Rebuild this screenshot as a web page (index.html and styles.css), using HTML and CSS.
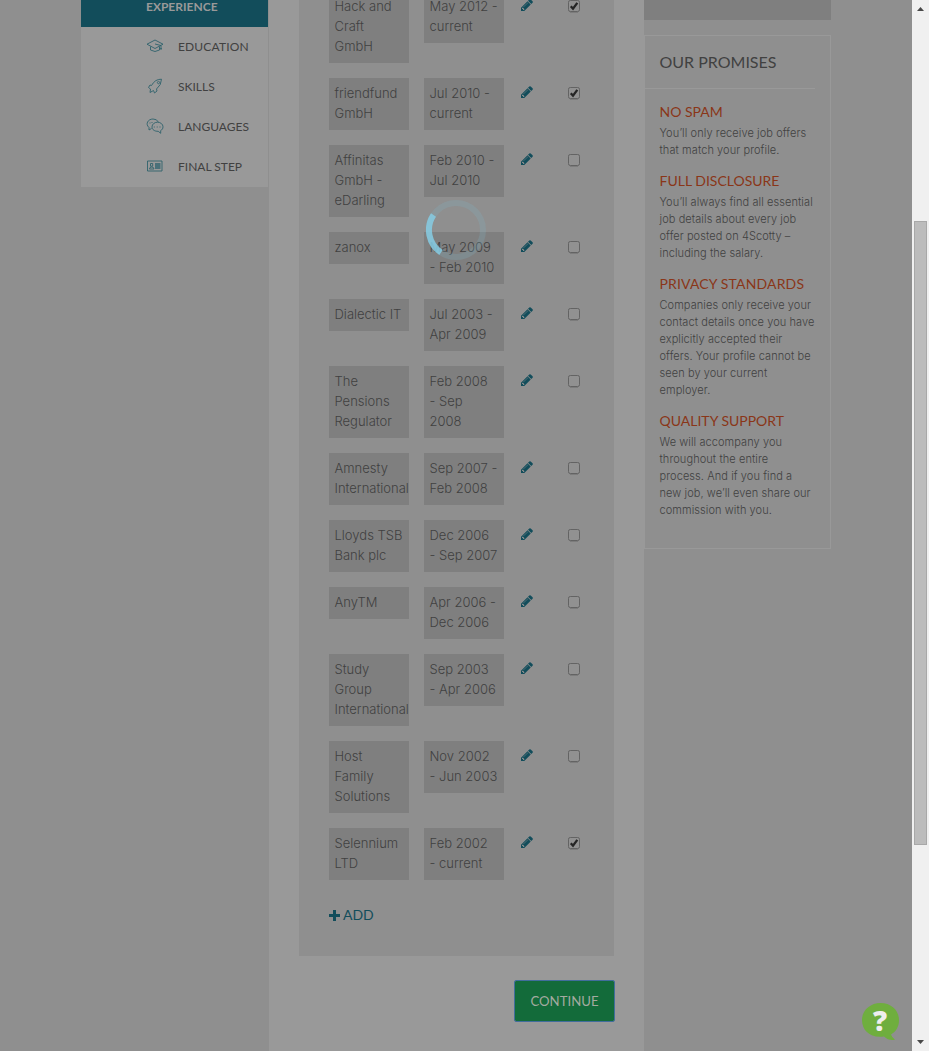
FILE: index.html
```
<!DOCTYPE html>
<html lang="en">
<head>
<meta charset="utf-8">
<title>Experience</title>
<link rel="stylesheet" href="styles.css">
</head>
<body>
<svg class="defs" width="0" height="0" aria-hidden="true">
  <symbol id="pencil" viewBox="0 0 1536 1536"><path d="M363 1408l91-91-235-235-91 91v107h128v128h107zM886 480q0-22-22-22-10 0-17 7l-542 542q-7 7-7 17 0 22 22 22 10 0 17-7l542-542q7-7 7-17zM832 288l416 416-832 832h-416v-416zM1515 384q0 53-37 90l-166 166-416-416 166-165q36-38 90-38 53 0 91 38l235 234q37 39 37 91z"/></symbol>
  <symbol id="off" viewBox="0 0 13 14"><path d="M2 12.500h8" stroke="#7c7c7c"/><rect x=".5" y=".5" width="11" height="11" rx="1.800" fill="#919191" stroke="#636363"/></symbol>
  <symbol id="on" viewBox="0 0 13 14"><use href="#off"/><path d="M2.800 6.200L5 8.700 9.300 2.900" fill="none" stroke="#252525" stroke-width="2.300"/></symbol>
</svg>
<div class="window">
  <div class="page">
    <nav class="sidebar">
      <div class="step active">EXPERIENCE</div>
      <div class="step wide">
        <svg class="icon" viewBox="0 0 18 16"><path d="M1 6.200L9 2l8 4.200L9 10.500zM4.500 8.500V12q4.500 3 9 0V8.500M9 6l6 1.500V12M14.200 10.500h1.600"/></svg>EDUCATION</div>
      <div class="step">
        <svg class="icon" viewBox="0 0 18 16"><path d="M5.500 7.500Q9 1 15.500 1.200 15.500 7 10.500 11L11 13l-2.500 2L7.500 12.500 4 14.500 4.500 11 2.500 9.500 4 7zM11.300 4.500a1.200 1.200 0 1 1 0 .1"/></svg>SKILLS</div>
      <div class="step">
        <svg class="icon" viewBox="0 0 18 16"><path d="M5.500 10.500L3 12V9.500C-1 6 2 1 7 1q4 0 5.300 3M11.500 4.200c3 0 5.500 2 5.500 4.600 0 2-1 3-2.300 3.700v2.800l-2.500-2c-3.500.2-6.200-1.700-6.200-4.400s2.500-4.700 5.500-4.700zM8.300 8.500v1M11.200 8.500v1M14 8.500v1M4 4.500v1M6 4v1"/></svg>LANGUAGES</div>
      <div class="step">
        <svg class="icon" viewBox="0 0 18 16"><path d="M1.500 3h14.500v10h-14.500zM3.500 11q0-2 2.200-2T8 11zM4.500 5.500h2.200v2.700H4.500z"/><path class="solid" d="M9 5h5.500v6H9z"/></svg>FINAL STEP</div>
    </nav>

    <main class="center">
      <section class="panel">
        <div class="jobs">
          <div class="job"><div class="cell">Hack and<br>Craft<br>GmbH</div><div class="cell">May 2012 -<br>current</div><svg class="edit"><use href="#pencil"/></svg><svg class="check"><use href="#on"/></svg></div>
          <div class="job"><div class="cell">friendfund<br>GmbH</div><div class="cell">Jul 2010 -<br>current</div><svg class="edit"><use href="#pencil"/></svg><svg class="check"><use href="#on"/></svg></div>
          <div class="job"><div class="cell">Affinitas<br>GmbH -<br>eDarling</div><div class="cell">Feb 2010 -<br>Jul 2010</div><svg class="edit"><use href="#pencil"/></svg><svg class="check"><use href="#off"/></svg></div>
          <div class="job"><div class="cell">zanox</div><div class="cell">May 2009<br>- Feb 2010</div><svg class="edit"><use href="#pencil"/></svg><svg class="check"><use href="#off"/></svg></div>
          <div class="job"><div class="cell">Dialectic IT</div><div class="cell">Jul 2003 -<br>Apr 2009</div><svg class="edit"><use href="#pencil"/></svg><svg class="check"><use href="#off"/></svg></div>
          <div class="job"><div class="cell">The<br>Pensions<br>Regulator</div><div class="cell">Feb 2008<br>- Sep<br>2008</div><svg class="edit"><use href="#pencil"/></svg><svg class="check"><use href="#off"/></svg></div>
          <div class="job"><div class="cell">Amnesty<br>International</div><div class="cell">Sep 2007 -<br>Feb 2008</div><svg class="edit"><use href="#pencil"/></svg><svg class="check"><use href="#off"/></svg></div>
          <div class="job"><div class="cell">Lloyds TSB<br>Bank plc</div><div class="cell">Dec 2006<br>- Sep 2007</div><svg class="edit"><use href="#pencil"/></svg><svg class="check"><use href="#off"/></svg></div>
          <div class="job"><div class="cell">AnyTM</div><div class="cell">Apr 2006 -<br>Dec 2006</div><svg class="edit"><use href="#pencil"/></svg><svg class="check"><use href="#off"/></svg></div>
          <div class="job"><div class="cell">Study<br>Group<br>International</div><div class="cell">Sep 2003<br>- Apr 2006</div><svg class="edit"><use href="#pencil"/></svg><svg class="check"><use href="#off"/></svg></div>
          <div class="job"><div class="cell">Host<br>Family<br>Solutions</div><div class="cell">Nov 2002<br>- Jun 2003</div><svg class="edit"><use href="#pencil"/></svg><svg class="check"><use href="#off"/></svg></div>
          <div class="job"><div class="cell">Selennium<br>LTD</div><div class="cell">Feb 2002<br>- current</div><svg class="edit"><use href="#pencil"/></svg><svg class="check"><use href="#on"/></svg></div>
        </div>
        <div class="add"><svg class="plus" viewBox="0 0 11 11"><path d="M5.500 0v11M0 5.500h11"/></svg>ADD</div>
      </section>
      <div class="actions"><button class="continue">CONTINUE</button></div>
    </main>

    <aside class="aside">
      <div class="stub"></div>
      <section class="promises">
        <h2>OUR PROMISES</h2>
        <h3>NO SPAM</h3>
        <p>You’ll only receive job offers<br>that match your profile.</p>
        <h3>FULL DISCLOSURE</h3>
        <p>You’ll always find all essential<br>job details about every job<br>offer posted on 4Scotty –<br>including the salary.</p>
        <h3 class="wide">PRIVACY STANDARDS</h3>
        <p>Companies only receive your<br>contact details once you have<br>explicitly accepted their<br>offers. Your profile cannot be<br>seen by your current<br>employer.</p>
        <h3>QUALITY SUPPORT</h3>
        <p>We will accompany you<br>throughout the entire<br>process. And if you find a<br>new job, we’ll even share our<br>commission with you.</p>
      </section>
    </aside>
  </div>
  <div class="scrollbar">
    <svg class="arrow" viewBox="0 0 7 4"><path d="M0 4L3.500 0 7 4z"/></svg>
    <div class="thumb"></div>
    <svg class="arrow" viewBox="0 0 7 4"><path d="M0 0L3.500 4 7 0z"/></svg>
  </div>
  <svg class="spinner" viewBox="0 0 60 60"><circle cx="30" cy="30" r="27"/><path d="M7.500 15A27 27 0 0 0 15 52.500"/></svg>
  <div class="help"><svg viewBox="0 0 38 38"><path d="M19.500 0C30 0 38 7 38 17c0 7-3 11.500-8 14.500q1 3 4 5.200-6 1.500-11-3.200C10 35.500 1 28 1 17 1 7 9.500 0 19.500 0z"/></svg><span>?</span></div>
</div>
</body>
</html>
```
FILE: styles.css
```
* { box-sizing: border-box; }
body { margin: 0; background: #8f8f8f; color: #414141; font: 300 13px/20px Inter, "Open Sans", sans-serif; }
.defs { position: absolute; }
.window { position: relative; display: flex; width: 929px; height: 1051px; overflow: hidden; }
.page { display: flex; align-items: flex-start; width: 912px; height: 1051px; padding-left: 81px; background: #8f8f8f; }

.sidebar { width: 187px; margin-right: 1px; background: #999; font: 400 12px/40px Lato, sans-serif; }
.step { display: flex; align-items: center; height: 40px; padding-left: 65px; }
.step.active { height: 27px; line-height: 14px; align-items: flex-start; background: #124d5b; color: #999; font-weight: 700; }
.step.wide { letter-spacing: .15px; }
.icon { width: 18px; height: 16px; margin: -3px 14px 0 0; fill: none; stroke: #2f626c; stroke-width: .9; }
.icon .solid { fill: #497079; stroke: none; }

.center { width: 375px; height: 1051px; padding: 0 30px; background: #999; }
.panel { height: 956px; padding: 0 30px; background: #8f8f8f; overflow: hidden; }
.jobs { display: flex; flex-direction: column; gap: 15px; margin-top: -9px; }
.job { display: flex; align-items: flex-start; }
.cell { width: 80px; margin-right: 15px; padding: 5px 0 7px 5.500px; background: #7f7f7f; white-space: nowrap; }
.edit { width: 12px; height: 12px; margin: 8px 35px 0 2px; fill: #124d5b; }
.check { width: 13px; height: 14px; margin-top: 9px; }
.add { display: flex; align-items: center; gap: 3px; margin-top: 25px; color: #124d5b; font: 400 14px/20px Lato, sans-serif; }
.plus { width: 11px; height: 11px; fill: none; stroke: #124d5b; stroke-width: 3; }
.actions { display: flex; justify-content: flex-end; padding-top: 25px; }
.continue { width: 99px; height: 40px; padding: 0; border: 0; border-radius: 1px; outline: 1px solid #416d9c; background: #136b3a; color: #a3aaa0; font: 400 13.200px/39px Lato, sans-serif; }

.aside { width: 187px; }
.stub { height: 20px; margin-bottom: 15px; background: #7f7f7f; }
.promises { height: 514px; padding: 0 15px 0 0; border: 1px solid #999; font-size: 11px; line-height: 17px; white-space: nowrap; }
.promises h2 { height: 53px; margin: 0 0 13px; padding-left: 14.500px; border-bottom: 1px solid #999; font: 400 16px/52px Lato, sans-serif; }
.promises h3 { margin: 0 0 3px 14.500px; color: #8a3618; font: 400 14px/20px Lato, sans-serif; }
.promises h3.wide { letter-spacing: .15px; }
.promises p { margin: 0 0 12px 14.500px; letter-spacing: .08px; }

.scrollbar { display: flex; flex-direction: column; align-items: center; width: 17px; height: 1051px; padding: 7px 0; background: #f0f0f0; }
.arrow { width: 7px; height: 4px; fill: #484848; }
.thumb { width: 13px; height: 624px; margin: 210px 0 auto; border: 1px solid #a8a8a8; background: #bcbcbc; }

.spinner { position: absolute; left: 426px; top: 200px; width: 60px; height: 60px; fill: none; stroke-width: 6; }
.spinner circle { stroke: rgba(126, 181, 202, .22); }
.spinner path { stroke: rgba(134, 205, 228, .82); }
.help { position: absolute; left: 861px; top: 1003px; width: 38px; height: 38px; }
.help svg { display: block; fill: #6fae3e; }
.help span { position: absolute; inset: 0; color: #eee; font: 800 28px/34px "Open Sans", sans-serif; text-align: center; }
```
